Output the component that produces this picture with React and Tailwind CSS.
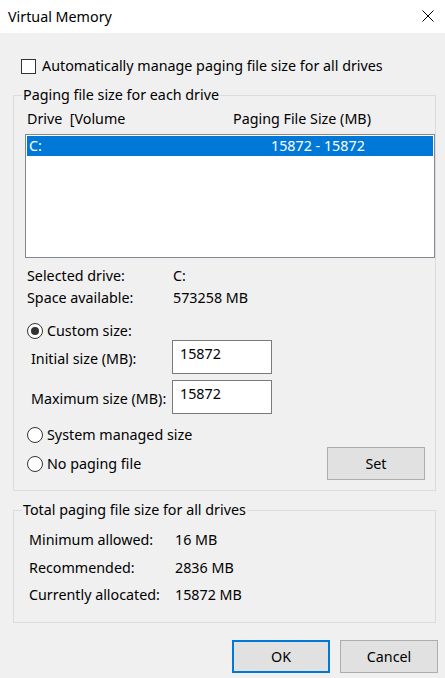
import React from 'react';

// Radio button in the Windows 10 look
const Radio = ({ checked, label }) => (
  <div className="flex items-center h-[20px]">
    <span className="w-[16px] h-[16px] rounded-full border border-[#333333] bg-white flex items-center justify-center">
      {checked && <span className="w-[8px] h-[8px] rounded-full bg-[#333333]" />}
    </span>
    <span className="ml-[4px]">{label}</span>
  </div>
);

const Row = ({ label, value, labelW = 'w-[146px]', className = '' }) => (
  <div className={`flex items-center h-[20px] ${className}`}>
    <span className={labelW}>{label}</span>
    <span>{value}</span>
  </div>
);

const SizeInput = ({ label, value, className = '' }) => (
  <div className={`flex items-start ${className}`}>
    <span className="w-[145px] pl-[4px] pt-[9px]">{label}</span>
    <div className="w-[100px] h-[34px] bg-white border border-[#7a7a7a] px-[7px] pt-[3px] leading-[20px]">
      {value}
    </div>
  </div>
);

const WinButton = ({ children, primary }) => (
  <button
    className={`w-[98px] h-[33px] bg-[#e1e1e1] ${
      primary ? 'border-2 border-[#0078d7]' : 'border border-[#adadad]'
    }`}
  >
    {children}
  </button>
);

export default function App() {
  return (
    <div
      className="w-[445px] h-[678px] bg-[#f0f0f0] text-black text-[14.3px] leading-[20px] overflow-hidden"
      style={{ fontFamily: '"Noto Sans", sans-serif' }}
    >
      {/* Title bar */}
      <div className="h-[33px] bg-white flex items-center justify-between pl-[8px] pr-[11px]">
        <span className="text-[14.3px]">Virtual Memory</span>
        <svg width="12" height="12" viewBox="0 0 12 12" className="mt-[-1px]">
          <path d="M0.5 0.5L11.5 11.5M11.5 0.5L0.5 11.5" stroke="#000" strokeWidth="1" />
        </svg>
      </div>

      {/* Auto manage checkbox */}
      <div className="flex items-center h-[20px] mt-[23px] ml-[21px]">
        <span className="w-[15px] h-[15px] border border-[#333333] bg-white" />
        <span className="ml-[6px]">Automatically manage paging file size for all drives</span>
      </div>

      {/* Per-drive group */}
      <fieldset className="mt-[9px] ml-[13px] w-[423px] h-[406px] border border-[#dcdcdc] pl-[8px] pr-0">
        <legend className="px-[1px] leading-[20px]">Paging file size for each drive</legend>

        <div className="flex h-[20px] mt-[4px] pl-[5px]">
          <span className="w-[206px]">Drive&nbsp;&nbsp;[Volume</span>
          <span>Paging File Size (MB)</span>
        </div>

        <div className="mt-[5px] ml-[3px] w-[410px] h-[124px] bg-white border border-[#828790] p-[1px]">
          <div className="h-[20px] bg-[#0078d7] text-white flex items-center">
            <span className="w-[244px] pl-[2px]">C:</span>
            <span>15872 - 15872</span>
          </div>
        </div>

        <div className="pl-[5px] mt-[8px]">
          <Row label="Selected drive:" value="C:" />
          <Row label="Space available:" value="573258 MB" className="mt-[2px]" />
        </div>

        <div className="pl-[5px] mt-[13px]">
          <Radio checked label="Custom size:" />
          <SizeInput label="Initial size (MB):" value="15872" className="-mt-[1px]" />
          <SizeInput label="Maximum size (MB):" value="15872" className="mt-[6px]" />
          <div className="mt-[11px]">
            <Radio label="System managed size" />
          </div>
          <div className="flex items-center justify-between mt-[2px] pr-[10px]">
            <Radio label="No paging file" />
            <WinButton>Set</WinButton>
          </div>
        </div>
      </fieldset>

      {/* Totals group */}
      <fieldset className="mt-[9px] ml-[13px] w-[423px] h-[123px] border border-[#dcdcdc] pl-[8px]">
        <legend className="px-[1px] leading-[20px]">Total paging file size for all drives</legend>
        <div className="pl-[7px] mt-[10px]">
          <Row label="Minimum allowed:" value="16 MB" />
          <Row label="Recommended:" value="2836 MB" className="mt-[8px]" />
          <Row label="Currently allocated:" value="15872 MB" className="mt-[7px]" />
        </div>
      </fieldset>

      {/* Dialog buttons */}
      <div className="flex justify-end gap-[10px] mt-[17px] pr-[7px]">
        <WinButton primary>OK</WinButton>
        <WinButton>Cancel</WinButton>
      </div>
    </div>
  );
}
